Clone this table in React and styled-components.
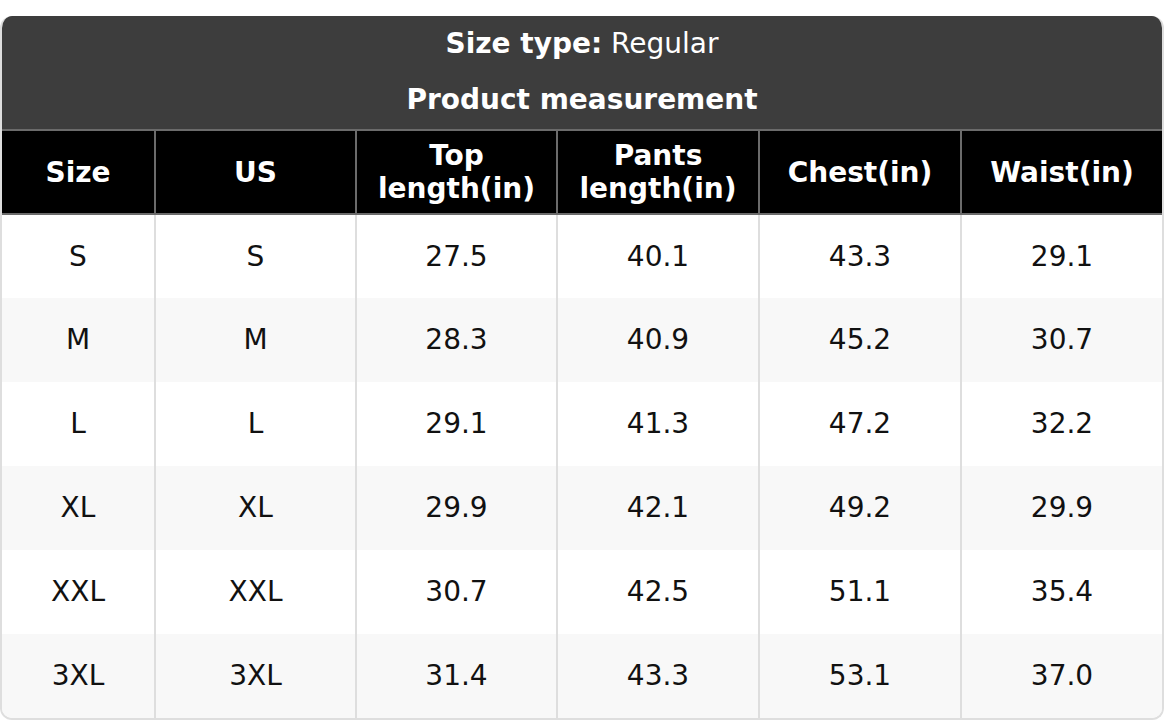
import React from "react";
import styled, { createGlobalStyle } from "styled-components";

const GlobalStyle = createGlobalStyle`
  html, body {
    margin: 0;
    padding: 0;
    background: #fff;
  }
  body {
    font-family: "DejaVu Sans", "Liberation Sans", sans-serif;
  }
`;

const Page = styled.div`
  padding-top: 16px;
`;

const Card = styled.div`
  width: 1164px;
  box-sizing: border-box;
  border: 2px solid #dedede;
  border-top: 0;
  border-radius: 12px;
  overflow: hidden;
`;

const Caption = styled.div`
  background: #3d3d3d;
  color: #fff;
  text-align: center;
  font-size: 28px;
  line-height: 34px;
  padding: 11px 0 12px;
  margin: 0 -2px;
`;

const CaptionLine = styled.div`
  font-weight: ${(p) => (p.bold ? 700 : 400)};
  & + & {
    margin-top: 22px;
  }
  b {
    font-weight: 700;
  }
  span {
    font-weight: 400;
  }
`;

const Table = styled.table`
  width: 100%;
  border-collapse: collapse;
  table-layout: fixed;
  font-size: 28px;
`;

const HeadCell = styled.th`
  height: 84px;
  box-sizing: border-box;
  padding: 7px 8px;
  background: #000;
  color: #fff;
  font-weight: 700;
  line-height: 33px;
  text-align: center;
  border: 2px solid #6b6b6b;
  &:first-child {
    border-left: 0;
  }
  &:last-child {
    border-right: 0;
  }
`;

const Row = styled.tr`
  background: ${(p) => (p.striped ? "#f8f8f8" : "#fff")};
`;

const Cell = styled.td`
  height: 84px;
  box-sizing: border-box;
  padding: 0 8px;
  color: #111;
  text-align: center;
  line-height: 34px;
  border-left: 2px solid #dedede;
  border-right: 2px solid #dedede;
  &:first-child {
    border-left: 0;
  }
  &:last-child {
    border-right: 0;
  }
`;

const columns = [
  { label: "Size", width: 153 },
  { label: "US", width: 201 },
  { label: ["Top", "length(in)"], width: 201 },
  { label: ["Pants", "length(in)"], width: 202 },
  { label: "Chest(in)", width: 202 },
  { label: "Waist(in)", width: 201 },
];

const rows = [
  ["S", "S", "27.5", "40.1", "43.3", "29.1"],
  ["M", "M", "28.3", "40.9", "45.2", "30.7"],
  ["L", "L", "29.1", "41.3", "47.2", "32.2"],
  ["XL", "XL", "29.9", "42.1", "49.2", "29.9"],
  ["XXL", "XXL", "30.7", "42.5", "51.1", "35.4"],
  ["3XL", "3XL", "31.4", "43.3", "53.1", "37.0"],
];

export default function App() {
  return (
    <Page>
      <GlobalStyle />
      <Card>
        <Caption>
          <CaptionLine>
            <b>Size type:</b> <span>Regular</span>
          </CaptionLine>
          <CaptionLine bold>Product measurement</CaptionLine>
        </Caption>
        <Table>
          <colgroup>
            {columns.map((c, i) => (
              <col key={i} style={{ width: c.width }} />
            ))}
          </colgroup>
          <thead>
            <tr>
              {columns.map((c, i) => (
                <HeadCell key={i}>
                  {Array.isArray(c.label) ? (
                    <>
                      {c.label[0]}
                      <br />
                      {c.label[1]}
                    </>
                  ) : (
                    c.label
                  )}
                </HeadCell>
              ))}
            </tr>
          </thead>
          <tbody>
            {rows.map((r, i) => (
              <Row key={i} striped={i % 2 === 1}>
                {r.map((v, j) => (
                  <Cell key={j}>{v}</Cell>
                ))}
              </Row>
            ))}
          </tbody>
        </Table>
      </Card>
    </Page>
  );
}
